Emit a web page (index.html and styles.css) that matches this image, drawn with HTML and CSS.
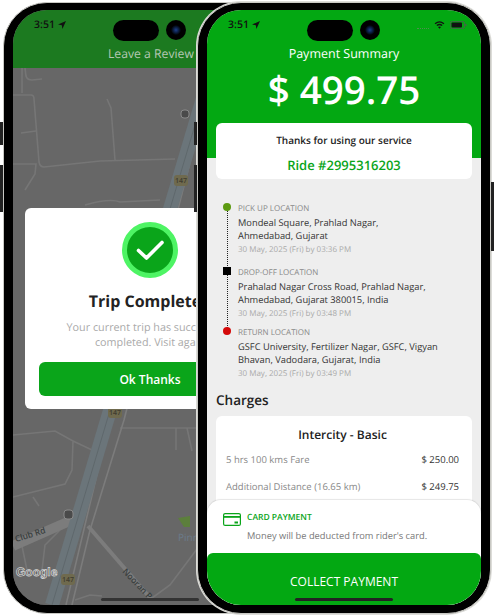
FILE: index.html
```html
<!DOCTYPE html>
<html lang="en">
<head>
    <meta charset="UTF-8">
    <meta name="viewport" content="width=device-width, initial-scale=1.0">
    <title>Payment Summary</title>
    <link rel="stylesheet" href="styles.css">
</head>

<body>
    <div class="stage">

        <!-- back phone: trip completed -->
        <div class="phone phone-back">
            <span class="side-btn btn-mute"></span>
            <span class="side-btn btn-vol"></span>
            <div class="screen">
                <svg class="map" viewBox="13 10 274 595" xmlns="http://www.w3.org/2000/svg">
                    <rect x="13" y="10" width="274" height="595" fill="#676767"/>
                    <g fill="none" stroke="#767676" stroke-width="1.6">
                        <path d="M22 68 L22 93 M25 68 L26 76 Q27 80 32 80 L42 79"/>
                        <path d="M13 95 L31 95 Q34 95 34 99 L39 162 Q40 167 44 167 L100 161 L175 159"/>
                        <path d="M21 133 L36 131 M13 164 L36 164 L35 174 L25 190"/>
                        <path d="M107 99 L111 108 L115 160"/>
                        <path d="M85 205 Q110 198 120 202 L160 200"/>
                        <path d="M13 435 L55 431 L73 441 L72 470 L65 484 L13 497 M73 441 L92 450"/>
                        <path d="M120 428 L200 428 M176 428 L176 450 M187 428 L192 451"/>
                        <path d="M33 497 L39 506 M22 546 L28 575 M60 530 L45 545 L42 570"/>
                        <path d="M152 598 L170 585 L200 545"/>
                        <path d="M75 600 L90 595 L102 596"/>
                    </g>
                    <g fill="none" stroke="#7c7c7c">
                        <path d="M13 546 L72 520" stroke-width="10"/>
                        <path d="M88 526 L152 600" stroke-width="4"/>
                        <path d="M200 100 L98 470 L66 605" stroke-width="1.6"/>
                        <path d="M206 100 L124 420 L90 530 L72 605" stroke-width="1.6"/>
                    </g>
                    <path d="M212 68 L52 605" fill="none" stroke="#6b757a" stroke-width="14"/>
                    <path d="M212 68 L52 605" fill="none" stroke="#5f686c" stroke-width="1"/>
                    <path d="M178 518 L190 516 L190 527 L184 527 Z" fill="#5c7f3c"/>
                    <g fill="#6f6a4e">
                        <rect x="108" y="407" width="14" height="11" rx="3"/>
                        <rect x="61" y="574" width="14" height="11" rx="3"/>
                        <rect x="174" y="175" width="14" height="11" rx="3"/>
                    </g>
                    <g class="map-shield">
                        <text x="115" y="415">147</text>
                        <text x="68" y="582">147</text>
                        <text x="181" y="183">147</text>
                    </g>
                    <g fill="#4a4a4a" stroke="#8a8a8a" stroke-width="1">
                        <rect x="64" y="510" width="9" height="9" rx="3"/>
                        <rect x="181" y="110" width="8" height="8" rx="3"/>
                    </g>
                    <text class="map-road" transform="translate(16 542) rotate(-17)">Club Rd</text>
                    <text class="map-road" transform="translate(122 572) rotate(46)">Nooran P</text>
                    <text class="map-place" x="178" y="541">Pinn</text>
                    <text class="map-logo" x="16" y="576">Google</text>
                </svg>

                <div class="dim-header">
                    <span class="status-time">3:51
                        <svg class="loc" viewBox="0 0 10 10"><path d="M10 0 L0 4.500 L4.800 5.200 L5.500 10 Z"/></svg>
                    </span>
                    <div class="island"><span class="pill"></span><span class="cam"></span></div>
                    <div class="dim-title">Leave a Review</div>
                </div>

                <div class="modal">
                    <div class="tick">
                        <svg viewBox="0 0 56 56">
                            <circle cx="28" cy="28" r="25.5" fill="#0aa51a" stroke="#4ef464" stroke-width="5"/>
                            <path d="M16.500 28.500 L24.500 36 L40 20.500" fill="none" stroke="#fff" stroke-width="3.600" stroke-linecap="round" stroke-linejoin="round"/>
                        </svg>
                    </div>
                    <h2>Trip Completed</h2>
                    <p>Your current trip has successfully<br>completed. Visit again</p>
                    <button class="ok-btn">Ok Thanks</button>
                </div>
                <span class="home-bar dark"></span>
            </div>
        </div>

        <!-- front phone: payment summary -->
        <div class="phone phone-front">
            <span class="side-btn btn-mute"></span>
            <span class="side-btn btn-vol"></span>
            <span class="side-btn btn-power"></span>
            <div class="screen light">
                <div class="top-green">
                    <span class="status-time">3:51
                        <svg class="loc" viewBox="0 0 10 10"><path d="M10 0 L0 4.500 L4.800 5.200 L5.500 10 Z"/></svg>
                    </span>
                    <div class="island"><span class="pill"></span><span class="cam"></span></div>
                    <div class="status-right">
                        <span class="signal"></span>
                        <svg class="wifi" viewBox="0 0 12 9">
                            <path d="M1 3 Q6 -1 11 3 M3 5 Q6 2.800 9 5" fill="none" stroke="#111" stroke-width="1.500"/>
                            <path d="M6 8.800 L4.300 6.800 Q6 5.600 7.700 6.800 Z"/>
                        </svg>
                        <svg class="battery" viewBox="0 0 17 8">
                            <rect x=".4" y=".4" width="14.200" height="7.200" rx="2" fill="none" stroke="#555" stroke-width=".8"/>
                            <rect x="1.500" y="1.500" width="10.500" height="5" rx="1" fill="#111"/>
                            <rect x="15.300" y="2.800" width="1.200" height="2.400" rx=".6" fill="#555"/>
                        </svg>
                    </div>
                    <div class="pay-title">Payment Summary</div>
                    <div class="pay-amount">$ 499.75</div>
                </div>

                <div class="thanks-card">
                    <div class="thanks">Thanks for using our service</div>
                    <div class="ride-no">Ride #2995316203</div>
                </div>

                <div class="route">
                    <div class="stop">
                        <span class="mark dot-green"></span>
                        <div class="stop-label">PICK UP LOCATION</div>
                        <div class="stop-addr">Mondeal Square, Prahlad Nagar,<br>Ahmedabad, Gujarat</div>
                        <div class="stop-date">30 May, 2025 (Fri) by 03:36 PM</div>
                    </div>
                    <div class="stop second">
                        <span class="mark sq-black"></span>
                        <div class="stop-label">DROP-OFF LOCATION</div>
                        <div class="stop-addr">Prahalad Nagar Cross Road, Prahlad Nagar,<br>Ahmedabad, Gujarat 380015, India</div>
                        <div class="stop-date">30 May, 2025 (Fri) by 03:48 PM</div>
                    </div>
                    <div class="stop last">
                        <span class="mark dot-red"></span>
                        <div class="stop-label">RETURN LOCATION</div>
                        <div class="stop-addr">GSFC University, Fertilizer Nagar, GSFC, Vigyan<br>Bhavan, Vadodara, Gujarat, India</div>
                        <div class="stop-date">30 May, 2025 (Fri) by 03:49 PM</div>
                    </div>
                </div>

                <h3 class="charges-title">Charges</h3>
                <div class="charges-card">
                    <div class="charges-head">Intercity - Basic</div>
                    <div class="charge-row"><span>5 hrs 100 kms Fare</span><b>$ 250.00</b></div>
                    <div class="charge-row"><span>Additional Distance (16.65 km)</span><b>$ 249.75</b></div>
                </div>

                <div class="pay-sheet">
                    <div class="card-note">
                        <svg class="card-icon" viewBox="0 0 18 13">
                            <rect x=".6" y=".6" width="16.800" height="11.800" rx="1.500" fill="none" stroke="#0aa51a" stroke-width="1.200"/>
                            <rect x="1" y="3" width="16" height="1.800" fill="#0aa51a"/>
                            <rect x="11.500" y="8.500" width="3.500" height="2" fill="#0aa51a"/>
                        </svg>
                        <div>
                            <div class="card-name">CARD PAYMENT</div>
                            <div class="card-text">Money will be deducted from rider's card.</div>
                        </div>
                    </div>
                    <button class="collect-btn">COLLECT PAYMENT</button>
                </div>
                <span class="home-bar"></span>
            </div>
        </div>
    </div>
</body>
</html>
```

FILE: styles.css
```css
body {
    font-family: 'Open Sans', sans-serif;
    margin: 0;
    padding: 0;
    background-color: #fff;
    color: #333;
    text-rendering: geometricPrecision;
}

.stage {
    position: relative;
    width: 494px;
    height: 615px;
    overflow: hidden;
}

/* phones */
.phone {
    position: absolute;
    top: 2px;
    width: 294px;
    height: 612px;
    box-sizing: border-box;
    padding: 7px 9px;
    background: #000;
    border: 1px solid #c9c9c4;
    border-radius: 44px;
}

.phone-back {
    left: 3px;
}

.phone-front {
    left: 197px;
    box-shadow: 0 0 0 1px #dcdcd8;
}

.side-btn {
    position: absolute;
    width: 3px;
    background: #222;
}

.btn-mute {
    left: -4px;
    top: 119px;
    height: 23px;
}

.btn-vol {
    left: -4px;
    top: 162px;
    height: 47px;
}

.btn-power {
    right: -4px;
    top: 179px;
    height: 69px;
}

.screen {
    position: relative;
    height: 595px;
    overflow: hidden;
    border-radius: 34px;
    background: #676767;
}

.screen.light {
    background: #eee;
}

/* map */
.map {
    position: absolute;
    left: 0;
    top: 0;
    width: 274px;
    height: 595px;
}

.map-shield text {
    font-size: 7px;
    font-weight: 600;
    fill: #3f3c30;
    text-anchor: middle;
}

.map-road {
    font-size: 8.500px;
    font-weight: 600;
    fill: #3a4040;
}

.map-place {
    font-size: 10px;
    fill: #6b7b8b;
}

.map-logo {
    font-family: 'Liberation Sans', sans-serif;
    font-size: 12px;
    font-weight: 700;
    fill: #555;
    stroke: #d8d8d8;
    stroke-width: .7;
}

/* status bar */
.status-time {
    position: absolute;
    left: 21px;
    top: 8px;
    display: flex;
    align-items: center;
    gap: 3px;
    font-size: 10.500px;
    line-height: 14px;
    font-weight: 600;
    color: #111;
}

.loc {
    width: 8px;
    height: 8px;
    fill: #111;
}

.island {
    position: absolute;
    left: 100px;
    top: 10px;
    display: flex;
    gap: 7px;
}

.pill {
    width: 46px;
    height: 21px;
    background: #000;
    border-radius: 11px;
}

.cam {
    width: 20px;
    height: 20px;
    border-radius: 50%;
    background: radial-gradient(circle at 50% 50%, #1d3f8a 0, #0a1a3a 3px, #000 5px);
}

.status-right {
    position: absolute;
    right: 14px;
    top: 11px;
    display: flex;
    align-items: center;
    gap: 5px;
    height: 8px;
}

.signal {
    width: 12px;
    border-bottom: 1px dotted #4f8f4f;
    margin-top: 6px;
}

.wifi {
    width: 11px;
    height: 8px;
    fill: #111;
}

.battery {
    width: 17px;
    height: 8px;
}

/* back phone */
.dim-header {
    position: relative;
    height: 58px;
    background: #1c7a20;
}

.dim-title {
    position: absolute;
    left: 95px;
    top: 35px;
    font-size: 12.200px;
    line-height: 18px;
    color: #b4c8b4;
    white-space: nowrap;
}

.modal {
    position: absolute;
    left: 12px;
    top: 198px;
    width: 250px;
    height: 201px;
    box-sizing: border-box;
    padding: 14px 14px 0;
    background: #fff;
    border-radius: 6px;
    text-align: center;
}

.tick svg {
    display: block;
    width: 56px;
    height: 56px;
    margin: 0 auto;
}

.modal h2 {
    margin: 11px 0 0;
    font-size: 16px;
    line-height: 24px;
    font-weight: 700;
    color: #222;
    white-space: nowrap;
}

.modal p {
    margin: 8px 0 0;
    font-size: 10.800px;
    line-height: 14.500px;
    color: #aaa;
    white-space: nowrap;
}

.ok-btn {
    display: block;
    width: 100%;
    height: 34px;
    margin-top: 12px;
    background: #0aa51a;
    color: #fff;
    border: none;
    border-radius: 6px;
    font-family: inherit;
    font-size: 12px;
    font-weight: 600;
}

/* front phone */
.top-green {
    position: relative;
    height: 148px;
    box-sizing: border-box;
    padding-top: 35px;
    background: #03a812;
    color: #fff;
    text-align: center;
}

.pay-title {
    font-size: 12.500px;
    line-height: 18px;
}

.pay-amount {
    margin-top: 4px;
    font-size: 38.500px;
    line-height: 46px;
    font-weight: 600;
}

.thanks-card {
    position: relative;
    margin: -35px 9px 0;
    height: 56px;
    box-sizing: border-box;
    padding-top: 10px;
    background: #fff;
    border-radius: 6px;
    text-align: center;
}

.thanks {
    font-size: 10px;
    line-height: 14px;
    font-weight: 600;
    color: #222;
}

.ride-no {
    margin-top: 9px;
    font-size: 13px;
    line-height: 18px;
    font-weight: 600;
    color: #0aa51a;
}

.route {
    margin: 23px 9px 0 31px;
}

.stop {
    position: relative;
    min-height: 64px;
}

.stop.second {
    min-height: 60px;
}

.stop.last {
    min-height: 47px;
}

.stop::before {
    content: "";
    position: absolute;
    left: -11px;
    top: 6px;
    bottom: -6px;
    border-left: 1px dotted #222;
}

.stop.last::before {
    display: none;
}

.mark {
    position: absolute;
    left: -15px;
    top: 1px;
    width: 8px;
    height: 8px;
    z-index: 1;
}

.dot-green {
    background: #5c9a10;
    border-radius: 50%;
}

.sq-black {
    background: #000;
}

.dot-red {
    background: #d40a0a;
    border-radius: 50%;
}

.stop-label {
    padding-top: 1px;
    font-size: 8px;
    line-height: 12px;
    color: #888;
}

.stop-addr {
    margin-top: 1px;
    font-size: 9.300px;
    line-height: 13px;
    color: #333;
    white-space: nowrap;
}

.stop-date {
    margin-top: 1px;
    font-size: 8px;
    line-height: 13px;
    color: #aaa;
}

.charges-title {
    margin: 11px 9px 0;
    font-size: 13.500px;
    line-height: 18px;
    font-weight: 600;
    color: #222;
}

.charges-card {
    margin: 7px 9px 0;
    height: 96px;
    box-sizing: border-box;
    padding: 10px 13px 0 10px;
    background: #fff;
    border-radius: 6px;
}

.charges-head {
    font-size: 12px;
    line-height: 18px;
    font-weight: 600;
    color: #222;
    text-align: center;
}

.charge-row {
    display: flex;
    justify-content: space-between;
    height: 27px;
    align-items: center;
    font-size: 9.500px;
    color: #888;
}

.charge-row b {
    font-weight: 400;
    color: #333;
}

.charges-head + .charge-row {
    margin-top: 2px;
}

.pay-sheet {
    position: absolute;
    left: 0;
    right: 0;
    bottom: 0;
    background: #fff;
    border-radius: 14px 14px 0 0;
    box-shadow: 0 -1px 1px rgba(0, 0, 0, 0.1);
}

.card-note {
    display: flex;
    align-items: flex-start;
    gap: 6px;
    height: 53px;
    box-sizing: border-box;
    padding: 12px 16px 0;
}

.card-icon {
    flex: none;
    width: 18px;
    height: 13px;
    margin-top: 1px;
}

.card-name {
    font-size: 8.500px;
    line-height: 12px;
    font-weight: 600;
    color: #0aa51a;
}

.card-text {
    margin-top: 5px;
    font-size: 9.300px;
    line-height: 13px;
    color: #777;
    white-space: nowrap;
}

.collect-btn {
    display: block;
    width: 100%;
    height: 52px;
    padding: 4px 0 0;
    background: #03a812;
    color: #fff;
    border: none;
    border-radius: 6px 6px 0 0;
    font-family: inherit;
    font-size: 12px;
}

.home-bar {
    position: absolute;
    left: 88px;
    bottom: 4px;
    width: 98px;
    height: 3px;
    background: #222;
    border-radius: 2px;
}

.home-bar.dark {
    background: #333;
}
```
